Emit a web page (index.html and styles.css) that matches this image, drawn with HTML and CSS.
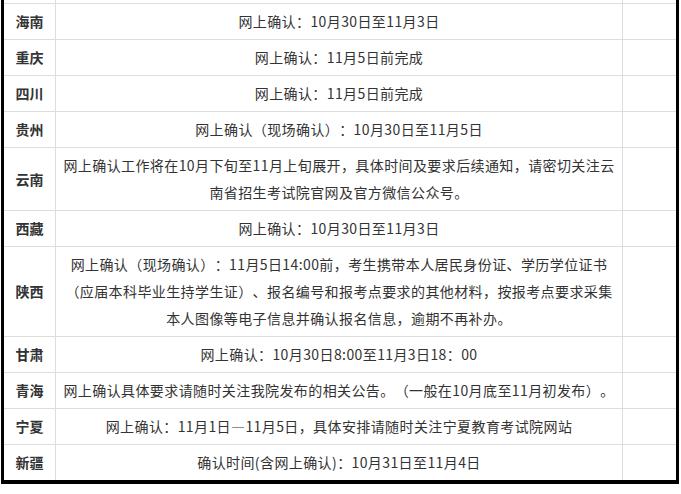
FILE: index.html
```html
<!DOCTYPE html>
<html lang="zh-CN">
<head>
<meta charset="utf-8">
<title>网上确认时间</title>
<link rel="stylesheet" href="styles.css">
</head>
<body>
<div class="frame">
  <div class="row spacer"><div class="name"></div><div class="info"></div><div class="extra"></div></div>
  <div class="row"><div class="name">海南</div><div class="info">网上确认：10月30日至11月3日</div><div class="extra"></div></div>
  <div class="row"><div class="name">重庆</div><div class="info">网上确认：11月5日前完成</div><div class="extra"></div></div>
  <div class="row"><div class="name">四川</div><div class="info">网上确认：11月5日前完成</div><div class="extra"></div></div>
  <div class="row"><div class="name">贵州</div><div class="info">网上确认（现场确认）：10月30日至11月5日</div><div class="extra"></div></div>
  <div class="row"><div class="name">云南</div><div class="info">网上确认工作将在10月下旬至11月上旬展开，具体时间及要求后续通知，请密切关注云<br>南省招生考试院官网及官方微信公众号。</div><div class="extra"></div></div>
  <div class="row"><div class="name">西藏</div><div class="info">网上确认：10月30日至11月3日</div><div class="extra"></div></div>
  <div class="row"><div class="name">陕西</div><div class="info">网上确认（现场确认）：11月5日14:00前，考生携带本人居民身份证、学历学位证书<br>（应届本科毕业生持学生证）、报名编号和报考点要求的其他材料，按报考点要求采集<br>本人图像等电子信息并确认报名信息，逾期不再补办。</div><div class="extra"></div></div>
  <div class="row"><div class="name">甘肃</div><div class="info">网上确认：10月30日8:00至11月3日18：00</div><div class="extra"></div></div>
  <div class="row"><div class="name">青海</div><div class="info">网上确认具体要求请随时关注我院发布的相关公告。（一般在10月底至11月初发布）。</div><div class="extra"></div></div>
  <div class="row"><div class="name">宁夏</div><div class="info">网上确认：11月1日—11月5日，具体安排请随时关注宁夏教育考试院网站</div><div class="extra"></div></div>
  <div class="row last"><div class="name">新疆</div><div class="info">确认时间(含网上确认)：10月31日至11月4日</div><div class="extra"></div></div>
</div>
</body>
</html>
```

FILE: styles.css
```css
html, body {
  margin: 0;
  padding: 0;
  background: #fff;
}

body {
  font-family: "Noto Sans CJK SC", "Noto Sans", sans-serif;
  font-size: 14px;
  color: #333;
  text-spacing-trim: space-all;
}

.frame {
  margin-left: 1px;
  width: 672px;
  border-left: 3px solid #000;
  border-right: 3px solid #000;
  border-bottom: 4px solid #000;
}

.row {
  display: grid;
  grid-template-columns: 52px 567px 53px;
  border-bottom: 1px solid #ddd;
}

.row.last {
  border-bottom: 0;
}

.row > div {
  box-sizing: border-box;
  padding: 4px 6px;
  line-height: 27px;
}

.spacer > div {
  height: 3px;
  padding: 0;
}

.name {
  border-right: 1px solid #ddd;
  font-weight: bold;
  display: flex;
  align-items: center;
  justify-content: center;
  white-space: nowrap;
}

.info {
  border-right: 1px solid #ddd;
  text-align: center;
  letter-spacing: 0.4px;
}
```
